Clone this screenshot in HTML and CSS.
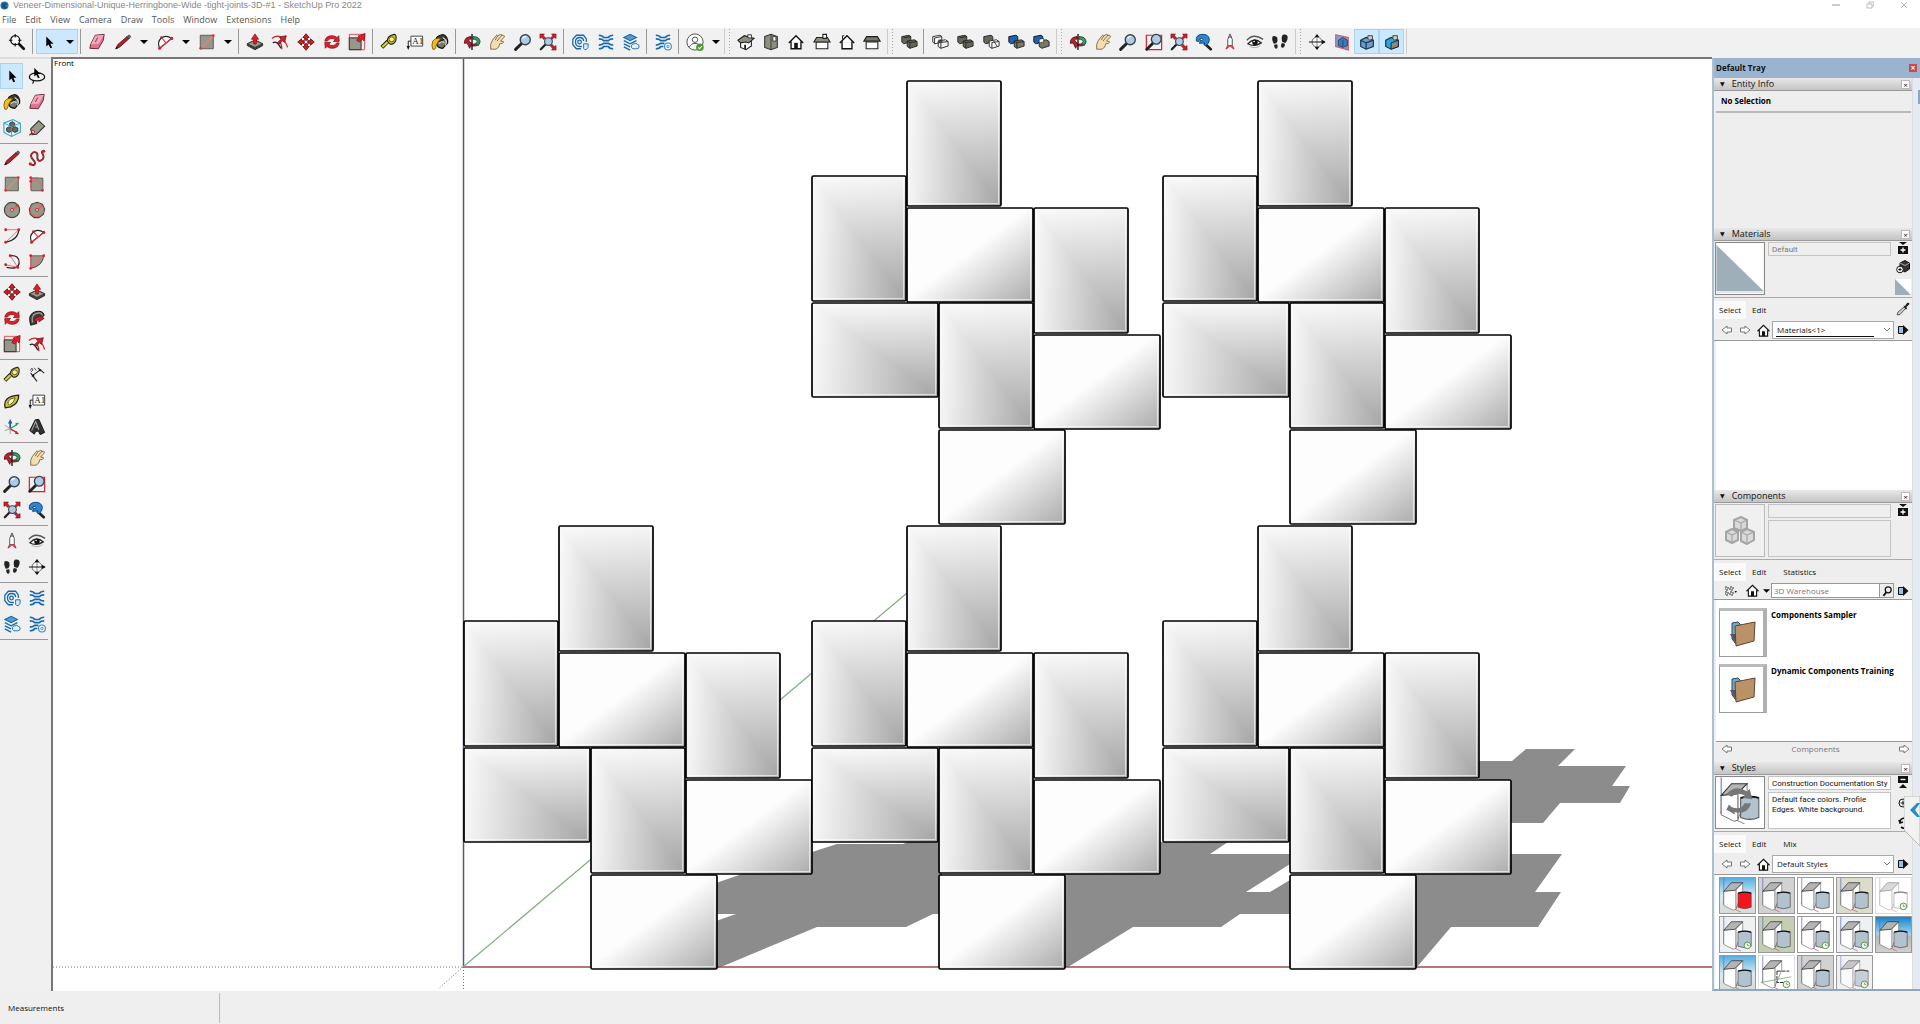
FILE: index.html
```html
<!DOCTYPE html>
<html lang="en">
<head>
<meta charset="utf-8">
<title>Veneer-Dimensional-Unique-Herringbone-Wide -tight-joints-3D-#1 - SketchUp Pro 2022</title>
<link rel="stylesheet" href="styles.css">
</head>
<body>
<svg class="sprite" aria-hidden="true">
  <defs>
    <linearGradient id="fadeDown" x1="0" y1="0" x2="0.05" y2="1"><stop offset="0" stop-color="#fafafa"/><stop offset="1" stop-color="#a8a8a8"/></linearGradient>
    <linearGradient id="fadeRight" x1="0" y1="0" x2="1" y2="0.05"><stop offset="0" stop-color="#fafafa"/><stop offset="1" stop-color="#a8a8a8"/></linearGradient>
    <linearGradient id="fadeCorner" x1="0.48" y1="0.48" x2="1" y2="1"><stop offset="0" stop-color="#fdfdfd"/><stop offset="1" stop-color="#aaaaaa"/></linearGradient>
    <linearGradient id="sky" x1="0" y1="0" x2="0" y2="1"><stop offset="0" stop-color="#58aede"/><stop offset=".5" stop-color="#d5eaf4"/><stop offset="1" stop-color="#d8dcd8"/></linearGradient>
    <linearGradient id="deepsky" x1="0" y1="0" x2="0" y2="1"><stop offset="0" stop-color="#1483cf"/><stop offset=".5" stop-color="#a8d4ec"/><stop offset=".55" stop-color="#b8b8b8"/><stop offset="1" stop-color="#d0d0d0"/></linearGradient>
  </defs>
  <symbol id="i-zoomsel" viewBox="0 0 20 20"><path d="M12.500 12.500 17.500 17.500" stroke="#111" stroke-width="3" stroke-linecap="round"/><circle cx="8" cy="8" r="5" fill="#fff" stroke="#111" stroke-width="1.400"/><path d="M8 1v4M8 11v4M1 8h4M11 8h4" stroke="#111" stroke-width="1.200"/></symbol>
  <symbol id="i-cursor" viewBox="0 0 20 20"><path d="M7 4v11l2.500-2.300 2 4.300 2-1-2-4h3.500z" fill="#000"/></symbol>
  <symbol id="i-lasso" viewBox="0 0 20 20"><ellipse cx="10" cy="11" rx="8.500" ry="4.500" fill="none" stroke="#111" stroke-width="1.400"/><path d="M5 15q2 1 0 3.500" fill="none" stroke="#111" stroke-width="1.300"/><path d="M7 1v9.500l2.200-2 2 4 1.800-.8-2-3.900h3z" fill="#000"/></symbol>
  <symbol id="i-eraser" viewBox="0 0 20 20"><path d="M8 2.500 18 1.500 17 8 11.500 17.500 2 17l1-4.500z" fill="#e0748f" stroke="#5a2030"/><path d="M8 3 17.500 2 12 12 3.300 12.500z" fill="#f4a7bb"/><path d="M8 10l3-5" stroke="#b5395b" stroke-width="1.200"/></symbol>
  <symbol id="i-pencil" viewBox="0 0 20 20"><path d="M2 17.500 4 13 14.500 4l2.200 2.300L6.500 15.500z" fill="#b51f2c" stroke="#3a0c10" stroke-width=".8"/><path d="M14.500 4 16 2.500q1-.5 2 .5t0 2L16.700 6.300z" fill="#666" stroke="#222" stroke-width=".6"/><path d="M1.500 18l1.300-3 2 2z" fill="#111"/></symbol>
  <symbol id="i-freehand" viewBox="0 0 20 20"><path d="M2.500 16.500C5 19 9 17.500 7.500 14.500S1.500 9 4 5.500s7-2 6.500 2 1 7 4.500 5 2.500-5 1-7.500 0-3 2-3" fill="none" stroke="#4c1016" stroke-width="2"/><path d="M2.500 16.500C5 19 9 17.500 7.500 14.500S1.500 9 4 5.500s7-2 6.500 2 1 7 4.500 5 2.500-5 1-7.500 0-3 2-3" fill="none" stroke="#c8283a" stroke-width="1.200"/><circle cx="2.500" cy="16.500" r="1.700" fill="#c8202c"/><circle cx="17.500" cy="2.500" r="1.700" fill="#c8202c"/></symbol>
  <symbol id="i-arc" viewBox="0 0 20 20"><path d="M4 17C0 8 8 0 17.500 6z" fill="#fff" stroke="#222" stroke-width="1.300"/><path d="M4 17 17.500 6M6 5l5 6" stroke="#e03540" stroke-width="1.300"/><g fill="#c8202c"><circle cx="4" cy="17" r="1.700"/><circle cx="17.500" cy="6" r="1.700"/><circle cx="6" cy="5" r="1.400"/></g></symbol>
  <symbol id="i-arc2" viewBox="0 0 20 20"><path d="M17.500 3Q17 14 3 17" fill="none" stroke="#222" stroke-width="1.300"/><path d="M3 3h14.500L3 17" fill="none" stroke="#f06a70" stroke-width="1.100"/><g fill="#c8202c"><circle cx="3" cy="3" r="1.600"/><circle cx="17.500" cy="3" r="1.600"/><circle cx="3" cy="17" r="1.600"/></g></symbol>
  <symbol id="i-arc3" viewBox="0 0 20 20"><path d="M8 3q10-1 10 8-1 8-14 5" fill="none" stroke="#222" stroke-width="1.300"/><path d="M8 3l8.500 13L3 13" fill="none" stroke="#f06a70" stroke-width="1.100"/><g fill="#c8202c"><circle cx="8" cy="3" r="1.600"/><circle cx="16.500" cy="16" r="1.600"/><circle cx="3" cy="13" r="1.600"/></g></symbol>
  <symbol id="i-pie" viewBox="0 0 20 20"><path d="M3 3h14.500Q16 15 3 17z" fill="#9b9a88" stroke="#333"/><path d="M3 17V3h14.500z" fill="none" stroke="#f06a70" stroke-width="1.100"/><g fill="#c8202c"><circle cx="3" cy="3" r="1.500"/><circle cx="17.500" cy="3" r="1.500"/><circle cx="3" cy="17" r="1.500"/></g></symbol>
  <symbol id="i-rect" viewBox="0 0 20 20"><path d="M2.500 2.500h14.500v15h-14.500z" fill="#97978a" stroke="#55554c"/><path d="M3 17 17 3" stroke="#f08080" stroke-width="1.300"/><circle cx="3" cy="17" r="1.500" fill="#d23a40"/><circle cx="17" cy="3" r="1.500" fill="#d23a40"/></symbol>
  <symbol id="i-rrect" viewBox="0 0 20 20"><path d="M3.500 3.500h13v14h-13z" fill="#97978a" stroke="#55554c"/><path d="M3 17V3h9M3 7q12-3 13 10" fill="none" stroke="#e86a70" stroke-width="1.200"/><g fill="#d22a35"><circle cx="3" cy="3" r="1.500"/><circle cx="3" cy="7" r="1.500"/><circle cx="16" cy="17" r="1.500"/></g></symbol>
  <symbol id="i-circle" viewBox="0 0 20 20"><circle cx="10" cy="10" r="8.500" fill="#97978a" stroke="#44443c" stroke-width="1.200"/><path d="M10 10l6-5" stroke="#e8575e" stroke-width="1.300"/><circle cx="10" cy="10" r="1.700" fill="#f3c0c0" stroke="#d22a35"/><circle cx="16" cy="5" r="1.400" fill="#d22a35"/></symbol>
  <symbol id="i-polygon" viewBox="0 0 20 20"><path d="M10 1.500l6 2L18.500 9 17 15l-5 3.500H7L2.500 15 1.500 9 4 3.500z" fill="#97978a" stroke="#44443c" stroke-width="1.200"/><circle cx="10" cy="10" r="7.500" fill="none" stroke="#e8575e"/><path d="M10 10l6-5" stroke="#e8575e" stroke-width="1.300"/><circle cx="10" cy="10" r="1.700" fill="#f3c0c0" stroke="#d22a35"/></symbol>
  <symbol id="i-pushpull" viewBox="0 0 20 20"><path d="M1.500 12 10 8l8.500 4v2L10 18.500 1.500 14z" fill="#44443c" stroke="#222"/><path d="M1.500 12 10 8l8.500 4L10 16z" fill="#9b9a88" stroke="#333"/><path d="M8.500 12V7H6l4-6 4 6h-2.500v5q-1.500 1-3 0z" fill="#e21f26" stroke="#7c1014" stroke-width=".8"/></symbol>
  <symbol id="i-offset" viewBox="0 0 20 20"><path d="M1 6Q12-2 18.500 16M12 18q0-6-3-9" fill="none" stroke="#d3202a" stroke-width="1.400"/><path d="M2 11q5-3 9 6" fill="none" stroke="#222" stroke-width="1.400"/><path d="M7 11l4-4-1.500-2.500L17 3l-2 7.500-2-2-4 4z" fill="#d3202a" stroke="#5c0d12" stroke-width=".8"/></symbol>
  <symbol id="i-move" viewBox="0 0 20 20"><path d="M10 .8 13.500 5h-2v3h-3V5h-2zM10 19.200 13.500 15h-2v-3h-3v3h-2zM.8 10 5 6.500v2h3v3H5v2zM19.200 10 15 6.500v2h-3v3h3v2z" fill="#d81d28" stroke="#60090f" stroke-width=".9"/></symbol>
  <symbol id="i-rotate" viewBox="0 0 20 20"><path d="M2 9Q3 3 10 3q3.500 0 5.500 2l2-2 .5 6.500h-6.500l2-2Q12 6 10 6 6 6 5 9zM18 11q-1 6-8 6-3.500 0-5.500-2l-2 2L2 10.500h6.500l-2 2q1.500 1.500 3.500 1.500 4 0 5-3z" fill="#e01f2a" stroke="#7c1014" stroke-width=".8"/></symbol>
  <symbol id="i-followme" viewBox="0 0 20 20"><path d="M3 18Q-1 6 8 3q9-2 10 4l-3 3q-6-3-7 1l2 5z" fill="#44443c" stroke="#111"/><path d="M5 15Q3 7 9 5t7 2" fill="none" stroke="#aaa" stroke-width="1.200"/><path d="M7 13q0-4 5-4V6.500l6 4-6 4V12q-2 0-2 2z" fill="#c8202c" stroke="#5c0d12" stroke-width=".7"/></symbol>
  <symbol id="i-scale" viewBox="0 0 20 20"><path d="M1.500 1.500h17v17h-17z" fill="#fbecec" stroke="#e0454e"/><path d="M1.500 5.500h13v13h-13z" fill="#97978a" stroke="#44443c" stroke-width="1.300"/><path d="M9.500 8 13 5 11 3.500 19 .5l-1 8.500-2-2-3.500 3z" fill="#e01f2a" stroke="#7c1014" stroke-width=".8"/></symbol>
  <symbol id="i-tape" viewBox="0 0 20 20"><path d="M2 16 9 9" stroke="#222" stroke-width="4.500"/><path d="M2.500 15.500 10 8.500" stroke="#d8cf2c" stroke-width="2.500"/><path d="M8 9q0-6 8-7.500 3 1 1.500 7-2 4-6 4z" fill="#cfc52f" stroke="#222" stroke-width="1.200"/><ellipse cx="13" cy="7" rx="3" ry="2.700" fill="#f2ee9a" stroke="#55511b"/></symbol>
  <symbol id="i-dim" viewBox="0 0 20 20"><path d="M3 8l7 9M11 2l7 6M4.500 11 14 4" fill="none" stroke="#222" stroke-width="1.200"/><path d="M4 12l3.500-.5-2-2.500zM15 3.500 11.500 4l2 2.500z" fill="#111"/><path d="M3 5q0-3 2-2t-2 4M7 2l2 3" fill="none" stroke="#444"/></symbol>
  <symbol id="i-protractor" viewBox="0 0 20 20"><path d="M2.500 17.500Q-1 5 17.500 3.500q0 9-9 13z" fill="#cfc52f" stroke="#222" stroke-width="1.400"/><path d="M5.500 13q0-6 8-6.500-1 5-6 8z" fill="#f7f5d5" stroke="#55511b"/></symbol>
  <symbol id="i-textlabel" viewBox="0 0 20 20"><path d="M5.500 3.500h13v11h-13z" fill="#fff" stroke="#333"/><path d="M5.500 9H2.500v7" fill="none" stroke="#222" stroke-width="1.100"/><path d="M.7 14.500h3.600L2.500 19z" fill="#111"/></symbol>
  <symbol id="i-paint" viewBox="0 0 20 20"><path d="M7 8 13 2q6 1 5.500 9L13 17q-6 0-7-6z" fill="#77776a" stroke="#111" stroke-width="1.300"/><ellipse cx="11" cy="5.500" rx="5.500" ry="3.200" transform="rotate(-18 11 5.500)" fill="#3a3a35" stroke="#111"/><path d="M13 5q6 3 3 9M9 12q3-4 6-1" fill="none" stroke="#ddd" stroke-width="1.200"/><path d="M11 6Q5 5 2 9q-2 5 0 9 3 1 3.500-3T11 6z" fill="#f3bf16" stroke="#6d5000" stroke-width=".9"/></symbol>
  <symbol id="i-components" viewBox="0 0 20 20"><path d="M1 4.500 11 .7l8.300 4v10L9.500 19.300 1 15z" fill="#e3f4fa" stroke="#35a0c8" stroke-width="1.200"/><g fill="#66665c" stroke="#222" stroke-width=".8"><path d="M7.500 4.500l3-1.500 2.500 1.500v3L10.500 9l-3-1.500zM4 10l3-1.500 2.500 1.500v3.500L7 15l-3-1.500zM10.500 10l3-1.500 3 1.500v3.500l-3 1.500-3-1.500z"/></g><path d="M1 4.500 9.500 8.500l9.800-3.800M9.500 8.500v10.800" fill="none" stroke="#35a0c8"/></symbol>
  <symbol id="i-tag" viewBox="0 0 20 20"><path d="M3 11 12 2l6.500 6-9 9-5 .5z" fill="#9b9a88" stroke="#333" stroke-width="1.200"/><circle cx="5.500" cy="14.500" r="1.700" fill="#fff" stroke="#a01820"/><path d="M5 15l-3.500 3" stroke="#a01820" stroke-width="1.500"/></symbol>
  <symbol id="i-axes" viewBox="0 0 20 20"><path d="M8 12V4" stroke="#1b5fae" stroke-width="2"/><path d="M5.500 6 8 1l2.500 5z" fill="#1b5fae"/><path d="M8 12 16 7" stroke="#2a9a58" stroke-width="1.400"/><path d="M14 9l4-3.500-4-.3z" fill="#2a9a58"/><path d="M8 12l7 4" stroke="#c8202c" stroke-width="1.500"/><path d="M18 18l-5-.5 2-3z" fill="#c8202c"/><path d="M2 8l6 4-6 2M8 12v6" fill="none" stroke="#999" stroke-width="1"/></symbol>
  <symbol id="i-text3d" viewBox="0 0 20 20"><path d="M2 14 8 2l4-.5L18.500 16l-5 2.500-2-4-3 .5-1.500 3z" fill="#33332e" stroke="#111"/><path d="M4 14 8.500 4l3.500 9M8 10h3" fill="none" stroke="#aaa" stroke-width="1.200"/></symbol>
  <symbol id="i-orbit" viewBox="0 0 20 20"><path d="M9 4Q1 4.500 1.500 11.500L4.500 11l3 6 1-3q7 1.500 9.500-2V9.500q-3 3.500-8 3L8 10Q4 9 9 6.500z" fill="#c01f2d" stroke="#4c0a10" stroke-width=".9"/><path d="M11 4q8 0 8 6l-2 4-3-2.500q3-2 1-3.500T11 7z" fill="#3a9a66" stroke="#0f4b2c" stroke-width=".9"/><path d="M10 1v18" stroke="#111" stroke-width="1.500"/></symbol>
  <symbol id="i-pan" viewBox="0 0 20 20"><path d="M3 18q-1-6 2-10L9 3q1-2 2 0l3-1.500q2 0 1 1.500l2-.5q2 .5 1 2L14 9l3 .5q1 1-1 2l-3 .5q0 4-4 6z" fill="#f6ddb0" stroke="#5d4a2a" stroke-width=".8"/><path d="M11 3 8 8M15 3l-5 6" stroke="#5d4a2a" stroke-width=".8"/></symbol>
  <symbol id="i-zoom" viewBox="0 0 20 20"><path d="M1.800 18.200 9 11" stroke="#222" stroke-width="3.200" stroke-linecap="round"/><circle cx="12.500" cy="7.500" r="5.600" fill="#aecbe6" stroke="#33424f" stroke-width="1.500"/><path d="M9.500 6q1.500-2.500 4-2.300" stroke="#fff" stroke-width="1.300" fill="none"/></symbol>
  <symbol id="i-zoomwin" viewBox="0 0 20 20"><path d="M1.500 2.500h17v16h-17z" fill="none" stroke="#d3202a" stroke-width="1.300"/><path d="M2 18 9 11" stroke="#222" stroke-width="3.200" stroke-linecap="round"/><circle cx="12.500" cy="7" r="5.400" fill="#aecbe6" stroke="#33424f" stroke-width="1.500"/></symbol>
  <symbol id="i-zoomext" viewBox="0 0 20 20"><path d="M2 18 8 12" stroke="#222" stroke-width="2.500" stroke-linecap="round"/><circle cx="10.500" cy="9.500" r="4.300" fill="#aecbe6" stroke="#33424f" stroke-width="1.200"/><path d="M1 1h5L5 3l2.500 2.500-2 2L3 5 1 6zM19 1h-5l1 2-2 2.500 1.500 1.500L17 5l2 1zM19 19h-5l1-2-2.500-2.500 2-2L17 15l2-1z" fill="#c8202c" stroke="#60090f" stroke-width=".5"/></symbol>
  <symbol id="i-zoomprev" viewBox="0 0 20 20"><path d="M11 12l6.500 6" stroke="#222" stroke-width="3" stroke-linecap="round"/><path d="M1.500 9q-1-7 6-7.500Q15 1 16 7q0 5-4 7l-2-1 1-2-6 .5 1-4 2 1.500q2-1 0-3-3-1-4 3.500z" fill="#2a86d4" stroke="#0f3f70"/></symbol>
  <symbol id="i-wh1" viewBox="0 0 20 20"><g fill="none" stroke="#1668ae" stroke-width="1.400"><path d="M17 10V6.500L14 2.500H6L2 7v6l4 4.500h5"/><path d="M14 9q0-4-4.500-4T5 10t5 5h2"/><circle cx="9.500" cy="10" r="2"/><path d="M14 12v5q1 2 3 1.500l2-2.500V12z" fill="#d7ebf7" stroke-width="1"/></g></symbol>
  <symbol id="i-wh2" viewBox="0 0 20 20"><path d="M2 2.500q4 0 5.500 2.500h5Q14 2.500 18 2.500M2 6.500q4 0 5.500 2h5q1.500-2 5.500-2M2 13.500q4 0 5.500-2h5q1.500 2 5.500 2M2 17.500q4 0 5.500-2.500h5q1.500 2.500 5.500 2.500" fill="none" stroke="#1668ae" stroke-width="1.800"/></symbol>
  <symbol id="i-wh3" viewBox="0 0 20 20"><path d="M2 5l7-3.500L16 5 9 8.500z" fill="#5a9bce" stroke="#1668ae" stroke-width="1.200"/><path d="M2 8.500 9 12l7-3.500M2 12l7 3.500M2 15.500 9 19" fill="none" stroke="#1668ae" stroke-width="1.500"/><path d="M10.500 14q1-2.500 3-2 2-1.500 3.500.5 2.500.5 2 3t-3 2h-4q-2-1-1.500-3.500z" fill="#e3f1fa" stroke="#1668ae"/></symbol>
  <symbol id="i-wh4" viewBox="0 0 20 20"><path d="M2 2.500q4 0 5.500 2.500h5Q14 2.500 18 2.500M2 6.500q4 0 5.500 2h5q1.500-2 5.500-2M2 13.500q4 0 5.500-2h4M2 17.500q4 0 5.500-2.500h3" fill="none" stroke="#1668ae" stroke-width="1.800"/><circle cx="15.500" cy="15" r="3.800" fill="#eef7fc" stroke="#3a8cc8" stroke-width="1.200"/><circle cx="15.500" cy="15" r="1.300" fill="none" stroke="#3a8cc8"/></symbol>
  <symbol id="i-user" viewBox="0 0 20 20"><circle cx="10" cy="10" r="9" fill="#fff" stroke="#555" stroke-width="1.100"/><circle cx="10" cy="7.500" r="3" fill="none" stroke="#555" stroke-width="1.100"/><path d="M3.500 16q2-4.500 6.500-4.500t6.500 4.500" fill="none" stroke="#555" stroke-width="1.100"/><circle cx="15.500" cy="15.800" r="4.200" fill="#4f9a2f"/><path d="M13.500 16l1.500 1.500 2.800-3" fill="none" stroke="#fff" stroke-width="1.200"/></symbol>
  <symbol id="i-iso" viewBox="0 0 20 20"><path d="M4 9v7l6 2.500 6-4V7z" fill="#fff" stroke="#222" stroke-width="1.200"/><path d="M1 8 8 3l11 3-6 5-3-1-6 1z" fill="#8f8f80" stroke="#222" stroke-width="1.200"/><path d="M12 2h4v4l-4-1z" fill="#fff" stroke="#222"/><path d="M9 13v5" stroke="#222" stroke-width="2"/></symbol>
  <symbol id="i-top" viewBox="0 0 20 20"><path d="M3 4l7-2.500L17 4v12l-7 2.500L3 16z" fill="#8f8f80" stroke="#33332e" stroke-width="1.200"/><path d="M10 2v16" stroke="#33332e"/><path d="M12 4h3.500v5H12z" fill="#fff" stroke="#333"/></symbol>
  <symbol id="i-front" viewBox="0 0 20 20"><path d="M2 11l8-8 8 8M4.500 9.500v8h11v-8" fill="#fff" stroke="#111" stroke-width="1.500"/><path d="M8 11h4v6.500H8z" fill="#111"/></symbol>
  <symbol id="i-right" viewBox="0 0 20 20"><path d="M3.500 10h13v7.500h-13z" fill="#fff" stroke="#222" stroke-width="1.200"/><path d="M4 5h12l3 5H1z" fill="#8f8f80" stroke="#222" stroke-width="1.200"/><path d="M11 1.500h4V6h-4z" fill="#fff" stroke="#222" stroke-width="1.200"/></symbol>
  <symbol id="i-back" viewBox="0 0 20 20"><path d="M2 11l8-8 8 8M4.500 9.500v8h11v-8" fill="#fff" stroke="#111" stroke-width="1.500"/><path d="M5 7V3h2" fill="none" stroke="#111"/></symbol>
  <symbol id="i-left" viewBox="0 0 20 20"><path d="M3.500 10h13v7.500h-13z" fill="#fff" stroke="#222" stroke-width="1.200"/><path d="M4 4h12l3 5H1z" fill="#77776a" stroke="#222" stroke-width="1.200"/></symbol>
  <symbol id="i-solid" viewBox="0 0 20 20"><path d="M2 4l8-1.500 2 1.500v6l-8 2-2-2z" fill="#66665c" stroke="#222"/><path d="M8 9l8-1.500 3 2v5L11 17l-3-2z" fill="#66665c" stroke="#222"/><path d="M8 9l3 1.500 8-1M11 10.500V17M4 5.500 12 4" fill="none" stroke="#222"/></symbol>
  <symbol id="i-solidwire" viewBox="0 0 20 20"><g fill="none" stroke="#222"><path d="M2 4l8-1.500 2 1.500v6l-8 2-2-2zM4 5.500 12 4M4 5.500V12" fill="#fff"/><path d="M8 9l8-1.500 3 2v5L11 17l-3-2zM11 10.500V17M11 10.500l8-1"/></g><path d="M8 7.500 12 7v4l-4 .5z" fill="#444"/></symbol>
  <symbol id="i-solidhalf" viewBox="0 0 20 20"><path d="M2 4l8-1.500 2 1.500v6l-8 2-2-2z" fill="#66665c" stroke="#222"/><path d="M8 9l8-1.500 3 2v5L11 17l-3-2zM11 10.500V17M11 10.500l8-1M13 9l4 6" fill="#fff" stroke="#222"/></symbol>
  <symbol id="i-solidblue" viewBox="0 0 20 20"><path d="M2 4l8-1.500 2 1.500v6l-8 2-2-2z" fill="#1b62b0" stroke="#111"/><path d="M8 9l8-1.500 3 2v5L11 17l-3-2z" fill="#77776a" stroke="#222"/><path d="M8 9l3 1.500 8-1M11 10.500V17" fill="none" stroke="#222"/></symbol>
  <symbol id="i-solidblue2" viewBox="0 0 20 20"><path d="M2 4l8-1.500 2 1.500v6l-8 2-2-2z" fill="#1b62b0" stroke="#111"/><path d="M8 9l8-1.500 3 2v5L11 17l-3-2z" fill="#77776a" stroke="#222"/><path d="M8 7l5-1v4l-5 1z" fill="#fff" stroke="#222" stroke-width=".7"/></symbol>
  <symbol id="i-camera" viewBox="0 0 20 20"><path d="M7.500 14V7L10 1l2.500 6v7z" fill="#fff" stroke="#444"/><circle cx="10" cy="4" r="1.500" fill="#777"/><path d="M7.500 14l-2 4M12.500 14l2 4M6 17.500 10 14l4 3.500" stroke="#d2303a" fill="none" stroke-width="1.200"/></symbol>
  <symbol id="i-eye" viewBox="0 0 20 20"><path d="M1 8Q8-.5 19 7" fill="none" stroke="#555" stroke-width="1.600"/><path d="M2 12q7-8 15-1-8 5-15 1z" fill="#fff" stroke="#222" stroke-width="1.400"/><circle cx="10" cy="10.500" r="3" fill="#111"/><circle cx="9" cy="9.500" r=".9" fill="#fff"/><path d="M4 15q7 3 12-1" stroke="#aaa" fill="none"/></symbol>
  <symbol id="i-feet" viewBox="0 0 20 20"><path d="M1.500 4q3-2 5.500 1 1 4-1 6.500l-3 .5Q.5 8 1.500 4zM3.500 13l3.500-.5q1 4-1 5-2.500 0-2.500-4.500zM13 2q4.500-1.500 5.500 2 0 5-2.500 7l-3.500-1Q11 5 13 2zM12 11l3.500 1q0 4.500-3 4.500Q10 15.500 12 11z" fill="#222"/></symbol>
  <symbol id="i-target" viewBox="0 0 20 20"><circle cx="10" cy="10" r="5.500" fill="#fff" stroke="#666" stroke-width="1.100"/><path d="M10 2v16" stroke="#777"/><path d="M1 10h18" stroke="#222" stroke-width="1.200"/><path d="M10 1 7.500 4.500h5zM19.500 10l-4-2.500v5zM10 19l-2.500-3.500h5z" fill="#111"/></symbol>
  <symbol id="i-plane" viewBox="0 0 20 20"><path d="M3 2l14 3v14L3 15z" fill="#7a9fd0" stroke="#d05a68" stroke-width="1.200"/><path d="M6 8l5-3 5 3v6l-5 2-5-2z" fill="#3f78b8" stroke="#28466e"/><path d="M11 8v7" stroke="#28466e"/></symbol>
  <symbol id="i-cut1" viewBox="0 0 20 20"><path d="M3 8l6-3 8 3v7l-8 3-6-3z" fill="#6d9cc8" stroke="#17304f" stroke-width="1.300"/><path d="M3 8l6 3 8-3M9 11v7" fill="none" stroke="#17304f" stroke-width="1.300"/><path d="M11 3h5v4l-3 1-2-2z" fill="#d8d2c0" stroke="#333"/></symbol>
  <symbol id="i-cut2" viewBox="0 0 20 20"><path d="M3 8l6-3 8 3v7l-8 3-6-3z" fill="#25a5de" stroke="#17304f" stroke-width="1.300"/><path d="M9 11l8-3v7l-8 3z" fill="#8d8873" stroke="#222"/><path d="M11 3h5v4l-3 1-2-2z" fill="#d8d2c0" stroke="#333"/></symbol>
  <symbol id="i-caret" viewBox="0 0 8 6"><path d="M0 1h8L4 5z" fill="#000"/></symbol>
  <symbol id="i-prev" viewBox="0 0 12 12"><path d="M1 6 6 2v2h4.500v4H6v2z" fill="#fff" stroke="#777"/></symbol>
  <symbol id="i-next" viewBox="0 0 12 12"><path d="M11 6 6 2v2H1.500v4H6v2z" fill="#fff" stroke="#777"/></symbol>
  <symbol id="i-detail" viewBox="0 0 12 12"><path d="M1.500 2.500h5v7h-5z" fill="#9fc0e0" stroke="#111"/><path d="M6 1l5.500 5L6 11z" fill="#111"/></symbol>
  <symbol id="i-pane" viewBox="0 0 12 12"><path d="M2 0h8L6 3z" fill="#111"/><path d="M1 4h10v8H1z" fill="#111"/><path d="M6 5.500v5M3.500 8h5" stroke="#fff" stroke-width="1.300"/></symbol>
  <symbol id="i-create" viewBox="0 0 14 14"><path d="M4 3l5-2.500L13.500 3v6L9 12 4 9z" fill="#333" stroke="#111"/><path d="M4 3l5 2.500L13.500 3" fill="none" stroke="#aaa"/><circle cx="4" cy="9.500" r="3.300" fill="#fff" stroke="#111"/><path d="M4 7.800v3.400M2.300 9.500h3.400" stroke="#111"/></symbol>
  <symbol id="i-dropper" viewBox="0 0 14 14"><path d="M1 13l1-3 6-5 1.500 1.500-5.500 6z" fill="#c8ccc8" stroke="#444" stroke-width=".8"/><path d="M7.500 3.500 9 4l2-3q2-1 2.500 1l-3 3 .5 2-1.500.5z" fill="#222"/></symbol>
  <symbol id="i-folder" viewBox="0 0 28 28"><path d="M4 3l6-1 2 2v19l-4 1-4-5z" fill="#6aaccb" stroke="#345"/><path d="M2 14l7 12V14z" fill="#556"/><path d="M7 6l20-4-1 19-18 5z" fill="#bb9168" stroke="#5c4630"/></symbol>
  <symbol id="i-cubes" viewBox="0 0 32 32"><g fill="#dadada" stroke="#a5a5a5" stroke-width="2" stroke-linejoin="round"><path d="M10 5l7-3 6 3v8l-6 3-7-3zM2 17l6-3 6 3v8l-6 3-6-3zM17 17l6-3 7 3v8l-7 4-6-3z"/><path d="M10 5l7 3 6-3M17 8v8M2 17l6 3 6-3M8 20v8M17 17l6 3 7-3M23 20v8" fill="none" stroke-width="1.200"/></g></symbol>
  <symbol id="scene" viewBox="0 0 37 37"><path d="M4 0v28" stroke="#6670c8" stroke-width=".8"/><path d="M3 27l19 9" stroke="#c8686c" stroke-width=".8"/><path d="M4 14v15l10 5 3-1V12z" fill="#fff" stroke="#555" stroke-width=".6"/><path d="M24 5v10l-7 17V12z" fill="#fff" stroke="#555" stroke-width=".6"/><path d="M4 14 12 5h12l-8 8z" fill="#b4b4b4" stroke="#333" stroke-width=".8"/></symbol>
  <symbol id="drum" viewBox="0 0 37 37"><path d="M19 16q7-2 14 0v15q-7 3-14 0z" fill="var(--drum, #b2c2ce)" stroke="#555" stroke-width=".8"/><path d="M19 16q7-2 14 0" fill="none" stroke="#111" stroke-width="1.400"/></symbol>
  <symbol id="clock" viewBox="0 0 37 37"><circle cx="29" cy="30" r="3.500" fill="#f3f8ee" stroke="#5b8d45"/><path d="M29 28v2h2" fill="none" stroke="#5b8d45" stroke-width=".8"/></symbol>
  <symbol id="wiredrum" viewBox="0 0 37 37"><path d="M19 16h13M19 16v12h13" fill="none" stroke="#222" stroke-dasharray="4 1"/><path d="M2 28l32-6" stroke="#6aa85a" stroke-width=".8"/></symbol>

  <symbol id="tile-tall" viewBox="0 0 97 128" overflow="visible"><rect width="94" height="125" rx="1.500" fill="url(#fadeRight)"/><path d="M0 0h94v125z" fill="url(#fadeDown)" shape-rendering="crispEdges"/><path d="M91.500 2v120.500H2" fill="none" stroke="#fff" stroke-opacity=".6"/><rect width="94" height="125" rx="1.500" fill="none" stroke="#000" stroke-width="1.700"/></symbol>
  <symbol id="tile-wide" viewBox="0 0 128 97" overflow="visible"><rect width="126" height="94" rx="1.500" fill="url(#fadeRight)"/><path d="M0 0h126v94z" fill="url(#fadeDown)" shape-rendering="crispEdges"/><path d="M123.500 2v89.500H2" fill="none" stroke="#fff" stroke-opacity=".6"/><rect width="126" height="94" rx="1.500" fill="none" stroke="#000" stroke-width="1.700"/></symbol>
  <symbol id="tile-lit" viewBox="0 0 128 97" overflow="visible"><rect width="126" height="94" rx="1.500" fill="url(#fadeCorner)"/><path d="M123.500 2v89.500H2" fill="none" stroke="#fff" stroke-opacity=".6"/><rect width="126" height="94" rx="1.500" fill="none" stroke="#000" stroke-width="1.700"/></symbol>
</svg>

<div class="app">
  <header class="titlebar">
    <svg class="logo" viewBox="0 0 10 10" aria-hidden="true"><circle cx="5" cy="5" r="4.500" fill="#2a78b0"/><path d="M2 3l4-1 2 2-3 1 3 2-3 2-3-2" fill="#175382"/></svg>
    <span class="doc">Veneer-Dimensional-Unique-Herringbone-Wide -tight-joints-3D-#1 - SketchUp Pro 2022</span>
    <div class="winctl">
      <button aria-label="Minimize"><svg viewBox="0 0 8 8"><path d="M0 4h8" stroke="#999"/></svg></button>
      <button aria-label="Restore"><svg viewBox="0 0 8 8"><path d="M1 3h5v4H1zM3 3V1h5v4H6" fill="none" stroke="#bbb"/></svg></button>
      <button aria-label="Close"><svg viewBox="0 0 8 8"><path d="M1 1l6 6M7 1 1 7" stroke="#bbb"/></svg></button>
    </div>
  </header>
  <nav class="menubar">
    <a href="#">File</a><a href="#">Edit</a><a href="#">View</a><a href="#">Camera</a><a href="#">Draw</a><a href="#">Tools</a><a href="#">Window</a><a href="#">Extensions</a><a href="#">Help</a>
  </nav>
  <div class="toolbar" role="toolbar" aria-label="Main tools">
    <div class="grp first"><button aria-label="Zoom selection"><svg><use href="#i-zoomsel"/></svg></button></div>
    <div class="grp pick"><div class="split on"><button aria-label="Select"><svg><use href="#i-cursor"/></svg></button><button class="dd" aria-label="Select options"><svg><use href="#i-caret"/></svg></button></div></div>
    <div class="grp draw">
      <button aria-label="Eraser"><svg><use href="#i-eraser"/></svg></button>
      <div class="split"><button aria-label="Line"><svg><use href="#i-pencil"/></svg></button><button class="dd" aria-label="Line options"><svg><use href="#i-caret"/></svg></button></div>
      <div class="split"><button aria-label="Arc"><svg><use href="#i-arc"/></svg></button><button class="dd" aria-label="Arc options"><svg><use href="#i-caret"/></svg></button></div>
      <div class="split"><button aria-label="Rectangle"><svg><use href="#i-rect"/></svg></button><button class="dd" aria-label="Shape options"><svg><use href="#i-caret"/></svg></button></div>
    </div>
    <div class="grp edit">
      <button aria-label="Push/Pull"><svg><use href="#i-pushpull"/></svg></button><button aria-label="Offset"><svg><use href="#i-offset"/></svg></button><button aria-label="Move"><svg><use href="#i-move"/></svg></button><button aria-label="Rotate"><svg><use href="#i-rotate"/></svg></button><button aria-label="Scale"><svg><use href="#i-scale"/></svg></button>
    </div>
    <div class="grp three">
      <button aria-label="Tape measure"><svg><use href="#i-tape"/></svg></button><button aria-label="Text"><svg class="label" viewBox="0 0 20 20"><use href="#i-textlabel"/><text x="7" y="12">A1</text></svg></button><button aria-label="Paint bucket"><svg><use href="#i-paint"/></svg></button>
    </div>
    <div class="grp four">
      <button aria-label="Orbit"><svg><use href="#i-orbit"/></svg></button><button aria-label="Pan"><svg><use href="#i-pan"/></svg></button><button aria-label="Zoom"><svg><use href="#i-zoom"/></svg></button><button aria-label="Zoom extents"><svg><use href="#i-zoomext"/></svg></button>
    </div>
    <div class="grp three">
      <button aria-label="3D Warehouse"><svg><use href="#i-wh1"/></svg></button><button aria-label="Extension Warehouse"><svg><use href="#i-wh2"/></svg></button><button aria-label="LayOut"><svg><use href="#i-wh3"/></svg></button>
    </div>
    <div class="grp one"><button aria-label="Extension Manager"><svg><use href="#i-wh4"/></svg></button></div>
    <div class="grp user"><div class="split"><button aria-label="Account"><svg><use href="#i-user"/></svg></button><button class="dd" aria-label="Account options"><svg><use href="#i-caret"/></svg></button></div></div>
    <div class="grp views grip">
      <button aria-label="Iso"><svg><use href="#i-iso"/></svg></button><button aria-label="Top"><svg><use href="#i-top"/></svg></button><button aria-label="Front"><svg><use href="#i-front"/></svg></button><button aria-label="Right"><svg><use href="#i-right"/></svg></button><button aria-label="Back"><svg><use href="#i-back"/></svg></button><button aria-label="Left"><svg><use href="#i-left"/></svg></button>
    </div>
    <div class="grp shell grip"><button aria-label="Outer shell"><svg><use href="#i-solid"/></svg></button></div>
    <div class="grp solids">
      <button aria-label="Intersect"><svg><use href="#i-solidwire"/></svg></button><button aria-label="Union"><svg><use href="#i-solid"/></svg></button><button aria-label="Subtract"><svg><use href="#i-solidhalf"/></svg></button><button aria-label="Trim"><svg><use href="#i-solidblue"/></svg></button><button aria-label="Split"><svg><use href="#i-solidblue2"/></svg></button>
    </div>
    <div class="grp camera grip">
      <button aria-label="Orbit"><svg><use href="#i-orbit"/></svg></button><button aria-label="Pan"><svg><use href="#i-pan"/></svg></button><button aria-label="Zoom"><svg><use href="#i-zoom"/></svg></button><button aria-label="Zoom window"><svg><use href="#i-zoomwin"/></svg></button><button aria-label="Zoom extents"><svg><use href="#i-zoomext"/></svg></button><button aria-label="Previous"><svg><use href="#i-zoomprev"/></svg></button><button aria-label="Position camera"><svg><use href="#i-camera"/></svg></button><button aria-label="Look around"><svg><use href="#i-eye"/></svg></button><button aria-label="Walk"><svg><use href="#i-feet"/></svg></button>
    </div>
    <div class="grp section grip">
      <button aria-label="Section plane"><svg><use href="#i-target"/></svg></button><button aria-label="Display section planes"><svg><use href="#i-plane"/></svg></button><button class="on" aria-label="Display section cuts"><svg><use href="#i-cut1"/></svg></button><button class="on" aria-label="Display section fill"><svg><use href="#i-cut2"/></svg></button>
    </div>
  </div>

  <div class="work">
    <aside class="tools" role="toolbar" aria-label="Large tool set">
      <div class="set">
        <button class="on" aria-label="Select"><svg><use href="#i-cursor"/></svg></button><button aria-label="Lasso"><svg><use href="#i-lasso"/></svg></button>
        <button aria-label="Paint bucket"><svg><use href="#i-paint"/></svg></button><button aria-label="Eraser"><svg><use href="#i-eraser"/></svg></button>
        <button aria-label="Make component"><svg><use href="#i-components"/></svg></button><button aria-label="Tag"><svg><use href="#i-tag"/></svg></button>
      </div>
      <div class="set tall">
        <button aria-label="Line"><svg><use href="#i-pencil"/></svg></button><button aria-label="Freehand"><svg><use href="#i-freehand"/></svg></button>
        <button aria-label="Rectangle"><svg><use href="#i-rect"/></svg></button><button aria-label="Rotated rectangle"><svg><use href="#i-rrect"/></svg></button>
        <button aria-label="Circle"><svg><use href="#i-circle"/></svg></button><button aria-label="Polygon"><svg><use href="#i-polygon"/></svg></button>
        <button aria-label="Arc"><svg><use href="#i-arc2"/></svg></button><button aria-label="2 point arc"><svg><use href="#i-arc"/></svg></button>
        <button aria-label="3 point arc"><svg><use href="#i-arc3"/></svg></button><button aria-label="Pie"><svg><use href="#i-pie"/></svg></button>
      </div>
      <div class="set">
        <button aria-label="Move"><svg><use href="#i-move"/></svg></button><button aria-label="Push/Pull"><svg><use href="#i-pushpull"/></svg></button>
        <button aria-label="Rotate"><svg><use href="#i-rotate"/></svg></button><button aria-label="Follow me"><svg><use href="#i-followme"/></svg></button>
        <button aria-label="Scale"><svg><use href="#i-scale"/></svg></button><button aria-label="Offset"><svg><use href="#i-offset"/></svg></button>
      </div>
      <div class="set">
        <button aria-label="Tape measure"><svg><use href="#i-tape"/></svg></button><button aria-label="Dimension"><svg><use href="#i-dim"/></svg></button>
        <button aria-label="Protractor"><svg><use href="#i-protractor"/></svg></button><button aria-label="Text"><svg class="label" viewBox="0 0 20 20"><use href="#i-textlabel"/><text x="7" y="12">A1</text></svg></button>
        <button aria-label="Axes"><svg><use href="#i-axes"/></svg></button><button aria-label="3D text"><svg><use href="#i-text3d"/></svg></button>
      </div>
      <div class="set">
        <button aria-label="Orbit"><svg><use href="#i-orbit"/></svg></button><button aria-label="Pan"><svg><use href="#i-pan"/></svg></button>
        <button aria-label="Zoom"><svg><use href="#i-zoom"/></svg></button><button aria-label="Zoom window"><svg><use href="#i-zoomwin"/></svg></button>
        <button aria-label="Zoom extents"><svg><use href="#i-zoomext"/></svg></button><button aria-label="Previous"><svg><use href="#i-zoomprev"/></svg></button>
      </div>
      <div class="set">
        <button aria-label="Position camera"><svg><use href="#i-camera"/></svg></button><button aria-label="Look around"><svg><use href="#i-eye"/></svg></button>
        <button aria-label="Walk"><svg><use href="#i-feet"/></svg></button><button aria-label="Section plane"><svg><use href="#i-target"/></svg></button>
      </div>
      <div class="set">
        <button aria-label="3D Warehouse"><svg><use href="#i-wh1"/></svg></button><button aria-label="Extension Warehouse"><svg><use href="#i-wh2"/></svg></button>
        <button aria-label="LayOut"><svg><use href="#i-wh3"/></svg></button><button aria-label="Extension Manager"><svg><use href="#i-wh4"/></svg></button>
      </div>
    </aside>

    <main class="viewport">
      <span class="viewname">Front</span>
      <svg class="model" viewBox="53 59 1659 932" preserveAspectRatio="xMinYMin meet" role="img" aria-label="Front view of the herringbone veneer panels">
        <defs>
          <g id="cluster">
            <use href="#tile-tall" x="559" y="526" width="97" height="128"/>
            <use href="#tile-tall" x="464" y="621" width="97" height="128"/>
            <use href="#tile-lit" x="559" y="653" width="128" height="97"/>
            <use href="#tile-tall" x="686" y="653" width="97" height="128"/>
            <use href="#tile-wide" x="464" y="748" width="128" height="97"/>
            <use href="#tile-tall" x="591" y="748" width="97" height="128"/>
            <use href="#tile-lit" x="686" y="780" width="128" height="97"/>
            <use href="#tile-lit" x="591" y="875" width="128" height="97"/>
          </g>
        </defs>
        <g fill="#8c8c8c">
          <path d="M716 883 745 873 812 852 837 844H903L910 841H942V914H933L906 927H817L716 969V921L736 914H716z"/>
          <path d="M1062 868H1150V842H1228L1210 854H1290V864L1246 892H1270L1290 880V914H1240L1221 927H1133L1068 967H1062z"/>
          <path d="M1479 761H1512L1526 749H1575L1558 766H1626L1612 786H1630L1620 803H1560L1543 823H1505L1479 800z"/>
          <path d="M1505 854H1562L1535 892H1561L1538 927H1451L1417 967H1410V860z"/>
        </g>
        <g fill="none">
          <path d="M463 967H1712" stroke="#9c4a50" stroke-width="1.500"/>
          <path d="M463.500 59V967" stroke="#55558c" stroke-width="1.500"/>
          <path d="M463 967 907 593" stroke="#7fb183" stroke-width="1.200"/>
          <path d="M53 967H463M463.500 967V991M463 967 438 989" stroke="#777" stroke-dasharray="1 2"/>
        </g>
        <use href="#cluster"/>
        <use href="#cluster" x="348"/>
        <use href="#cluster" x="699"/>
        <use href="#cluster" x="348" y="-445"/>
        <use href="#cluster" x="699" y="-445"/>
      </svg>
    </main>

    <aside class="tray">
      <div class="traytitle"><span>Default Tray</span><button aria-label="Close tray">×</button></div>
      <div class="traybody">
        <div class="panels">
          <section class="panel entity">
            <h2><button class="fold">▼</button><span>Entity Info</span><button class="x" aria-label="Close Entity Info">×</button></h2>
            <p class="nosel">No Selection</p>
          </section>

          <section class="panel materials">
            <h2><button class="fold">▼</button><span>Materials</span><button class="x" aria-label="Close Materials">×</button></h2>
            <div class="info">
              <svg class="preview" viewBox="0 0 49 53"><path d="M0 0h49v53H0z" fill="#fff"/><path d="M0 2 49 50H0z" fill="#9fafb9"/><path d="M0 51h49" stroke="#ccc"/></svg>
              <div class="fields"><input aria-label="Material name" value="Default" disabled></div>
              <div class="side"><button aria-label="Show secondary pane"><svg><use href="#i-pane"/></svg></button><button aria-label="Create material"><svg><use href="#i-create"/></svg></button><svg class="sw" viewBox="0 0 16 16"><path d="M0 0h16v16H0z" fill="#fff"/><path d="M0 0l16 16H0z" fill="#9fafb9"/></svg></div>
            </div>
            <div class="tabs"><button class="sel">Select</button><button>Edit</button><button class="sample" aria-label="Sample paint"><svg><use href="#i-dropper"/></svg></button></div>
            <div class="nav"><button aria-label="Back"><svg><use href="#i-prev"/></svg></button><button aria-label="Forward"><svg><use href="#i-next"/></svg></button><button class="home" aria-label="In model"><svg><use href="#i-front"/></svg></button><select class="lined" aria-label="Library"><option>Materials&lt;1&gt;</option></select><button aria-label="Details"><svg><use href="#i-detail"/></svg></button></div>
            <div class="list"></div>
          </section>

          <section class="panel components">
            <h2><button class="fold">▼</button><span>Components</span><button class="x" aria-label="Close Components">×</button></h2>
            <div class="info">
              <div class="preview empty"><svg><use href="#i-cubes"/></svg></div>
              <div class="fields"><input aria-label="Component name" disabled><textarea aria-label="Component description" disabled></textarea></div>
              <div class="side"><button aria-label="Show secondary pane"><svg><use href="#i-pane"/></svg></button></div>
            </div>
            <div class="tabs"><button class="sel">Select</button><button>Edit</button><button>Statistics</button></div>
            <div class="nav">
              <button class="viewas" aria-label="View options"><svg viewBox="0 0 12 12"><path d="M0 2h3v3H0zM5 2h3v3H5zM0 7h3v3H0zM5 7h3v3H5z" fill="none" stroke="#333" stroke-dasharray="2 1"/><path d="M9.500 6H12l-1.300 2z" fill="#111"/></svg></button><button class="home" aria-label="In model"><svg><use href="#i-front"/></svg></button><button class="more" aria-label="Navigation"><svg><use href="#i-caret"/></svg></button><input type="text" aria-label="Search" placeholder="3D Warehouse"><button class="find" aria-label="Find"><svg viewBox="0 0 10 10"><circle cx="6" cy="4" r="2.500" fill="none" stroke="#111"/><path d="M4.500 6 2 9" stroke="#111" stroke-width="1.500"/></svg></button><button aria-label="Details"><svg><use href="#i-detail"/></svg></button>
            </div>
            <div class="list folders">
              <a href="#"><span class="thumb"><svg><use href="#i-folder"/></svg></span><b>Components Sampler</b></a>
              <a href="#"><span class="thumb"><svg><use href="#i-folder"/></svg></span><b>Dynamic Components Training</b></a>
            </div>
            <div class="pager"><button aria-label="Previous page"><svg><use href="#i-prev"/></svg></button><span>Components</span><button aria-label="Next page"><svg><use href="#i-next"/></svg></button></div>
          </section>

          <section class="panel styles">
            <h2><button class="fold">▼</button><span>Styles</span><button class="x" aria-label="Close Styles">×</button></h2>
            <div class="info">
              <svg class="preview" viewBox="0 0 37 39"><path d="M0 0h37v39H0z" fill="#fff"/><use href="#scene" width="37" height="37"/><use href="#drum" width="37" height="37"/><path d="M8 13q7-8 16-2l2-2 2 8-7-1 1-2q-6-3-10 1zM27 20q-2 9-13 7l1 2-7-4 2-4 2 2q7 3 10-3z" fill="#777"/></svg>
              <div class="fields"><input class="white" aria-label="Style name" value="Construction Documentation Sty"><textarea class="white" aria-label="Style description">Default face colors. Profile
Edges. White background.</textarea></div>
              <div class="side"><button aria-label="Hide secondary pane"><svg viewBox="0 0 12 12"><path d="M1 0h10v7H1z" fill="#111"/><path d="M3.500 3.500h5" stroke="#fff" stroke-width="1.300"/><path d="M6 8l4 4H2z" fill="#111"/></svg></button><button aria-label="Create style"><svg viewBox="0 0 12 12"><circle cx="6" cy="6" r="4" fill="#fff" stroke="#111"/><path d="M6 3.500v5M3.500 6h5" stroke="#111"/></svg></button><button aria-label="Update style"><svg viewBox="0 0 12 12"><path d="M9 1Q3 1 3 5M2 3l1 3 3-1M4 10q4 3 6-1" fill="none" stroke="#111" stroke-width="1.600"/></svg></button></div>
            </div>
            <div class="tabs"><button class="sel">Select</button><button>Edit</button><button>Mix</button></div>
            <div class="nav"><button aria-label="Back"><svg><use href="#i-prev"/></svg></button><button aria-label="Forward"><svg><use href="#i-next"/></svg></button><button class="home" aria-label="In model"><svg><use href="#i-front"/></svg></button><select aria-label="Style library"><option>Default Styles</option></select><button aria-label="Details"><svg><use href="#i-detail"/></svg></button></div>
            <div class="swatches">
              <button class="red" aria-label="3D printing style"><svg viewBox="0 0 37 37"><path d="M0 0h37v37H0z" fill="url(#sky)"/><use href="#scene"/><use href="#drum"/></svg></button>
              <button class="gray" aria-label="Architectural design"><svg viewBox="0 0 37 37"><use href="#scene"/><use href="#drum"/></svg></button>
              <button aria-label="Construction documentation"><svg viewBox="0 0 37 37"><use href="#scene"/><use href="#drum"/></svg></button>
              <button class="tan" aria-label="Earth modeling"><svg viewBox="0 0 37 37"><use href="#scene"/><use href="#drum"/></svg></button>
              <button class="ghost" aria-label="Hidden line"><svg viewBox="0 0 37 37"><g opacity=".5"><use href="#scene"/><use href="#drum"/></g><use href="#clock"/></svg></button>
              <button class="pale" aria-label="Interior design"><svg viewBox="0 0 37 37"><use href="#scene"/><use href="#drum"/><use href="#clock"/></svg></button>
              <button class="green" aria-label="Landscape"><svg viewBox="0 0 37 37"><use href="#scene"/><use href="#drum"/></svg></button>
              <button aria-label="Planning"><svg viewBox="0 0 37 37"><use href="#scene"/><use href="#drum"/><use href="#clock"/></svg></button>
              <button class="pale" aria-label="Product design"><svg viewBox="0 0 37 37"><use href="#scene"/><use href="#drum"/><use href="#clock"/></svg></button>
              <button aria-label="Simple"><svg viewBox="0 0 37 37"><path d="M0 0h37v37H0z" fill="url(#deepsky)"/><use href="#scene"/><use href="#drum"/></svg></button>
              <button aria-label="Urban planning"><svg viewBox="0 0 37 37"><path d="M0 0h37v37H0z" fill="url(#sky)"/><use href="#scene"/><use href="#drum"/></svg></button>
              <button class="ghost" aria-label="Wireframe"><svg viewBox="0 0 37 37"><use href="#scene"/><use href="#wiredrum"/><use href="#clock"/></svg></button>
              <button class="gray" aria-label="Woodworking"><svg viewBox="0 0 37 37"><use href="#scene"/><use href="#drum"/></svg></button>
              <button class="xray" aria-label="X-ray"><svg viewBox="0 0 37 37"><g opacity=".7"><use href="#scene"/><use href="#drum"/></g><use href="#clock"/></svg></button>
            </div>
          </section>
        </div>
        <div class="scroll"><i></i></div>
      </div>
      <button class="pull" aria-label="Expand side panel"><svg viewBox="0 0 16 50"><path d="M0 0h16v50L0 34z" fill="#f2f2f2" stroke="#bbb"/><path d="M13 7 6 14l7 7h3l-5-7 5-7z" fill="#2a8cc4"/></svg></button>
    </aside>
  </div>
  <footer class="status"><label for="vcb">Measurements</label><input id="vcb" type="text"></footer>
</div>
</body>
</html>
```
FILE: styles.css
```css
* { box-sizing: border-box; }

body {
  margin: 0;
  font: 9px/12px "Open Sans", "Noto Sans", sans-serif;
  color: #222;
  background: #f0f0f0;
}

button, input, select, textarea {
  margin: 0;
  padding: 0;
  border: 0;
  border-radius: 0;
  background: none;
  font: inherit;
  color: inherit;
}

.sprite { position: absolute; width: 0; height: 0; }

.app { display: flex; flex-direction: column; height: 100vh; overflow: hidden; }

/* title and menus */
.titlebar { display: flex; align-items: center; height: 12px; padding-bottom: 2px; background: #fff; color: #888; gap: 4px; }
.logo { width: 9px; height: 9px; }
.doc { flex: 1; font-family: "Liberation Sans", sans-serif; line-height: 10px; white-space: nowrap; }
.winctl { display: flex; gap: 26px; padding-right: 12px; }
.winctl button { display: flex; }
.winctl svg { width: 8px; height: 8px; }
.menubar { display: flex; gap: 9px; height: 16px; padding: 2px 2px 0; background: #fff; }
.menubar a { color: #555; text-decoration: none; }

/* horizontal toolbar */
.toolbar { display: flex; height: 29px; padding: 1px 0 3px; background: #f1f1f1; }
.toolbar svg, .tools svg { display: block; width: 18px; height: 18px; }
.toolbar .dd svg { width: 8px; height: 6px; }
.label text { font: 10px "Liberation Serif", serif; fill: #111; }
.grp { display: flex; padding: 0 2px 0 3px; border-right: 1px solid #999; }
.grp > button { flex: 1; display: flex; align-items: center; justify-content: center; min-width: 0; }
.split { display: flex; flex: 0 0 42px; }
.split button { flex: 1; display: flex; align-items: center; justify-content: center; }
.split .dd { flex: 0 0 16px; }
.on { background: #cce8ff; box-shadow: inset 0 0 0 1px #a8d4f2; }
.grip { padding-left: 8px; background: repeating-linear-gradient(#aaa 0 1px, transparent 1px 3px) 4px 0 / 1px 100% no-repeat; border-right-color: #ccc; }
.first { width: 33px; }
.pick { width: 48px; }
.draw { width: 158px; }
.edit { width: 134px; }
.three { width: 83px; }
.four { width: 108px; }
.one { width: 32px; }
.user { width: 46px; border-right-color: #ccc; }
.views { width: 163px; }
.shell { width: 36px; border-right-color: #999; }
.solids { width: 133px; border-right-color: #ccc; }
.camera { width: 239px; }
.section { width: 111px; }

/* work area */
.work { display: flex; flex: 1; min-height: 0; }
.tools { width: 51px; padding-top: 2px; border-top: 2px solid #ddd; background: #f0f0f0; }
.set { display: grid; grid-template-columns: 23px 27px; grid-auto-rows: 26px; padding: 2px 0; margin-right: 3px; border-bottom: 1px solid #999; }
.set.tall { padding: 1px 0; }
.set button { display: flex; align-items: center; justify-content: center; }

.viewport { position: relative; flex: 1; min-width: 0; background: #fff; border: solid #777; border-width: 2px 0 0 2px; }
.viewname { position: absolute; left: 1px; top: -2px; font-size: 8px; color: #000; }
.model { display: block; width: 100%; height: 100%; }

/* tray */
.tray { position: relative; display: flex; flex-direction: column; width: 208px; margin-top: 1px; border-left: 2px solid #a9bfd6; border-bottom: 2px solid #8ea6be; }
.traytitle { display: flex; align-items: center; justify-content: space-between; flex: 0 0 20px; padding: 0 3px 0 2px; background: #9ab4d0; font: bold 8px/20px "Open Sans", sans-serif; color: #111; }
.traytitle button { width: 8px; height: 8px; background: #c84a54; color: #fff; line-height: 8px; }
.traybody { display: flex; flex: 1; min-height: 0; background: #eee; }
.panels { display: flex; flex-direction: column; flex: 1; min-width: 0; }
.scroll { width: 8px; padding-top: 12px; border-left: 1px solid #ddd; background: #e4ebf2; }
.scroll i { display: block; width: 2px; height: 14px; margin-left: 5px; background: #8fa5bd; }
.panel { display: flex; flex-direction: column; }
.panel h2 { display: flex; align-items: center; gap: 7px; flex: 0 0 13px; margin: 0; padding: 0 2px 0 6px; border-bottom: 1px solid #999; background: linear-gradient(#e8e8e8, #c4c4c4); font-size: 9px; line-height: 12px; font-weight: 400; color: #111; }
.panel h2 span { flex: 1; }
.fold { font: 6px/8px "DejaVu Sans", sans-serif; }
.x { width: 9px; height: 9px; background: #fff; border: 1px solid #bbb; font-size: 8px; line-height: 7px; }
.entity { flex: 0 0 150px; }
.nosel { margin: 0 1px 0 2px; padding: 3px 5px; border-bottom: 2px solid #bbb; font: bold 8px/14px "Open Sans", sans-serif; color: #000; }
.materials { flex: 0 0 262px; }
.components { flex: 0 0 272px; }
.styles { flex: 1; min-height: 0; }

.info { display: flex; flex: 0 0 57px; gap: 3px; padding: 1px 0 2px 1px; border-bottom: 1px solid #aaa; }
.preview { width: 50px; height: 53px; border: 1px solid #888; }
.empty { display: grid; place-items: center; background: #f0f0f0; border-color: #bbb; }
.empty svg { width: 32px; height: 32px; }
.fields { display: flex; flex-direction: column; gap: 2px; flex: 1; min-width: 0; }
.fields input, .fields textarea { width: 100%; height: 14px; padding: 0 0 0 3px; border: 1px solid #c4c4c4; color: #777; font-family: Roboto, sans-serif; font-size: 8px; line-height: 10px; resize: none; overflow: hidden; }
.fields textarea { flex: 1; padding-top: 2px; }
.fields .white { background: #fff; color: #111; }
.side { display: flex; flex-direction: column; align-items: center; justify-content: space-between; width: 18px; }
.side button { display: flex; }
.side svg { width: 12px; height: 12px; }
.side .sw { width: 16px; height: 16px; }
.materials .side button + button svg { width: 14px; height: 14px; }

.tabs { display: flex; flex: 0 0 20px; align-items: center; margin-top: 2px; font-size: 8px; color: #111; }
.tabs button { padding: 0 6px; height: 18px; }
.tabs button:nth-child(2) { margin-right: 5px; }
.tabs .sel { padding: 0 5px; background: #fafafa; }
.tabs .sample { margin: 0 0 0 auto; padding: 0 2px; }
.tabs .sample svg { width: 14px; height: 14px; }

.nav { display: flex; flex: 0 0 21px; align-items: center; padding-left: 4px; border-bottom: 1px solid #999; }
.components .nav { flex-basis: 18px; }
.nav button { display: flex; align-items: center; justify-content: center; width: 18px; height: 17px; }
.nav svg { width: 12px; height: 12px; }
.nav .home svg { width: 15px; height: 15px; }
.nav select { flex: 1; min-width: 0; height: 18px; padding: 0 4px; border: 1px solid #aaa; font-size: 8px; color: #111; appearance: none; background: url("data:image/svg+xml,%3Csvg xmlns='http://www.w3.org/2000/svg' width='6' height='4'%3E%3Cpath d='M0 0l3 3 3-3' fill='none' stroke='%23777'/%3E%3C/svg%3E") right 3px center no-repeat, #fff; }
.nav .lined { background: linear-gradient(#111, #111) 3px 14px / 98px 1px no-repeat, url("data:image/svg+xml,%3Csvg xmlns='http://www.w3.org/2000/svg' width='6' height='4'%3E%3Cpath d='M0 0l3 3 3-3' fill='none' stroke='%23777'/%3E%3C/svg%3E") right 3px center no-repeat, #fff; }
.nav input { flex: 1; min-width: 0; height: 15px; padding: 0 2px; border: 1px solid #999; background: #fff; font-size: 8px; }
.nav input::placeholder { color: #777; opacity: 1; }
.nav .viewas { width: 25px; }
.nav .more { width: 10px; }
.nav .more svg { width: 7px; height: 6px; }
.nav .find { width: 14px; height: 15px; border: 1px solid #999; border-left: 0; }
.list { flex: 1; margin: 0 0 0 2px; background: #fff; }
.folders { display: flex; flex-direction: column; gap: 7px; padding: 8px 0 0 3px; }
.folders a { display: flex; gap: 4px; color: #000; text-decoration: none; font-size: 8px; line-height: 14px; white-space: nowrap; }
.thumb { display: grid; place-items: center; width: 48px; height: 49px; background: #fff; border: 1px solid #999; border-width: 3px 4px 1px 1px; border-color: #bbb #b0b0b0 #999 #999; }
.thumb svg { width: 28px; height: 28px; }
.pager { display: flex; flex: 0 0 21px; align-items: flex-start; justify-content: space-between; padding: 1px 2px 0 5px; margin-left: 2px; border-top: 1px solid #999; color: #777; font-size: 8px; }
.pager button { display: flex; }
.pager svg { width: 12px; height: 12px; }

.swatches { display: grid; grid-template-columns: repeat(5, 37px); grid-auto-rows: 37px; gap: 2px; flex: 1; min-height: 0; overflow: hidden; padding: 2px 0 0 4px; margin-left: 1px; background: #fff; }
.swatches button { border: 1px solid #999; background: #fff; }
.swatches svg { display: block; width: 100%; height: 100%; }
.swatches .red { --drum: #f4141c; }
.swatches .gray { background: #d2d2d2; }
.swatches .tan { background: #dcdccb; }
.swatches .green { background: #c3cfb0; }
.swatches .pale { background: #eef1f3; }
.swatches .ghost { --drum: #fff; border-color: #ddd; }
.swatches .xray { background: #f1f1f1; }

/* tab that opens the side panel, over the tray's edge */
.pull { position: absolute; right: 0; top: 738px; width: 16px; height: 50px; }
.pull svg { display: block; width: 16px; height: 50px; }

.status { display: flex; align-items: center; flex: 0 0 33px; padding-left: 8px; background: #efefef; font-size: 8px; color: #111; }
.status label { flex: 0 0 64px; }
.status input { width: 148px; height: 30px; border-right: 1px solid #bbb; }
```
